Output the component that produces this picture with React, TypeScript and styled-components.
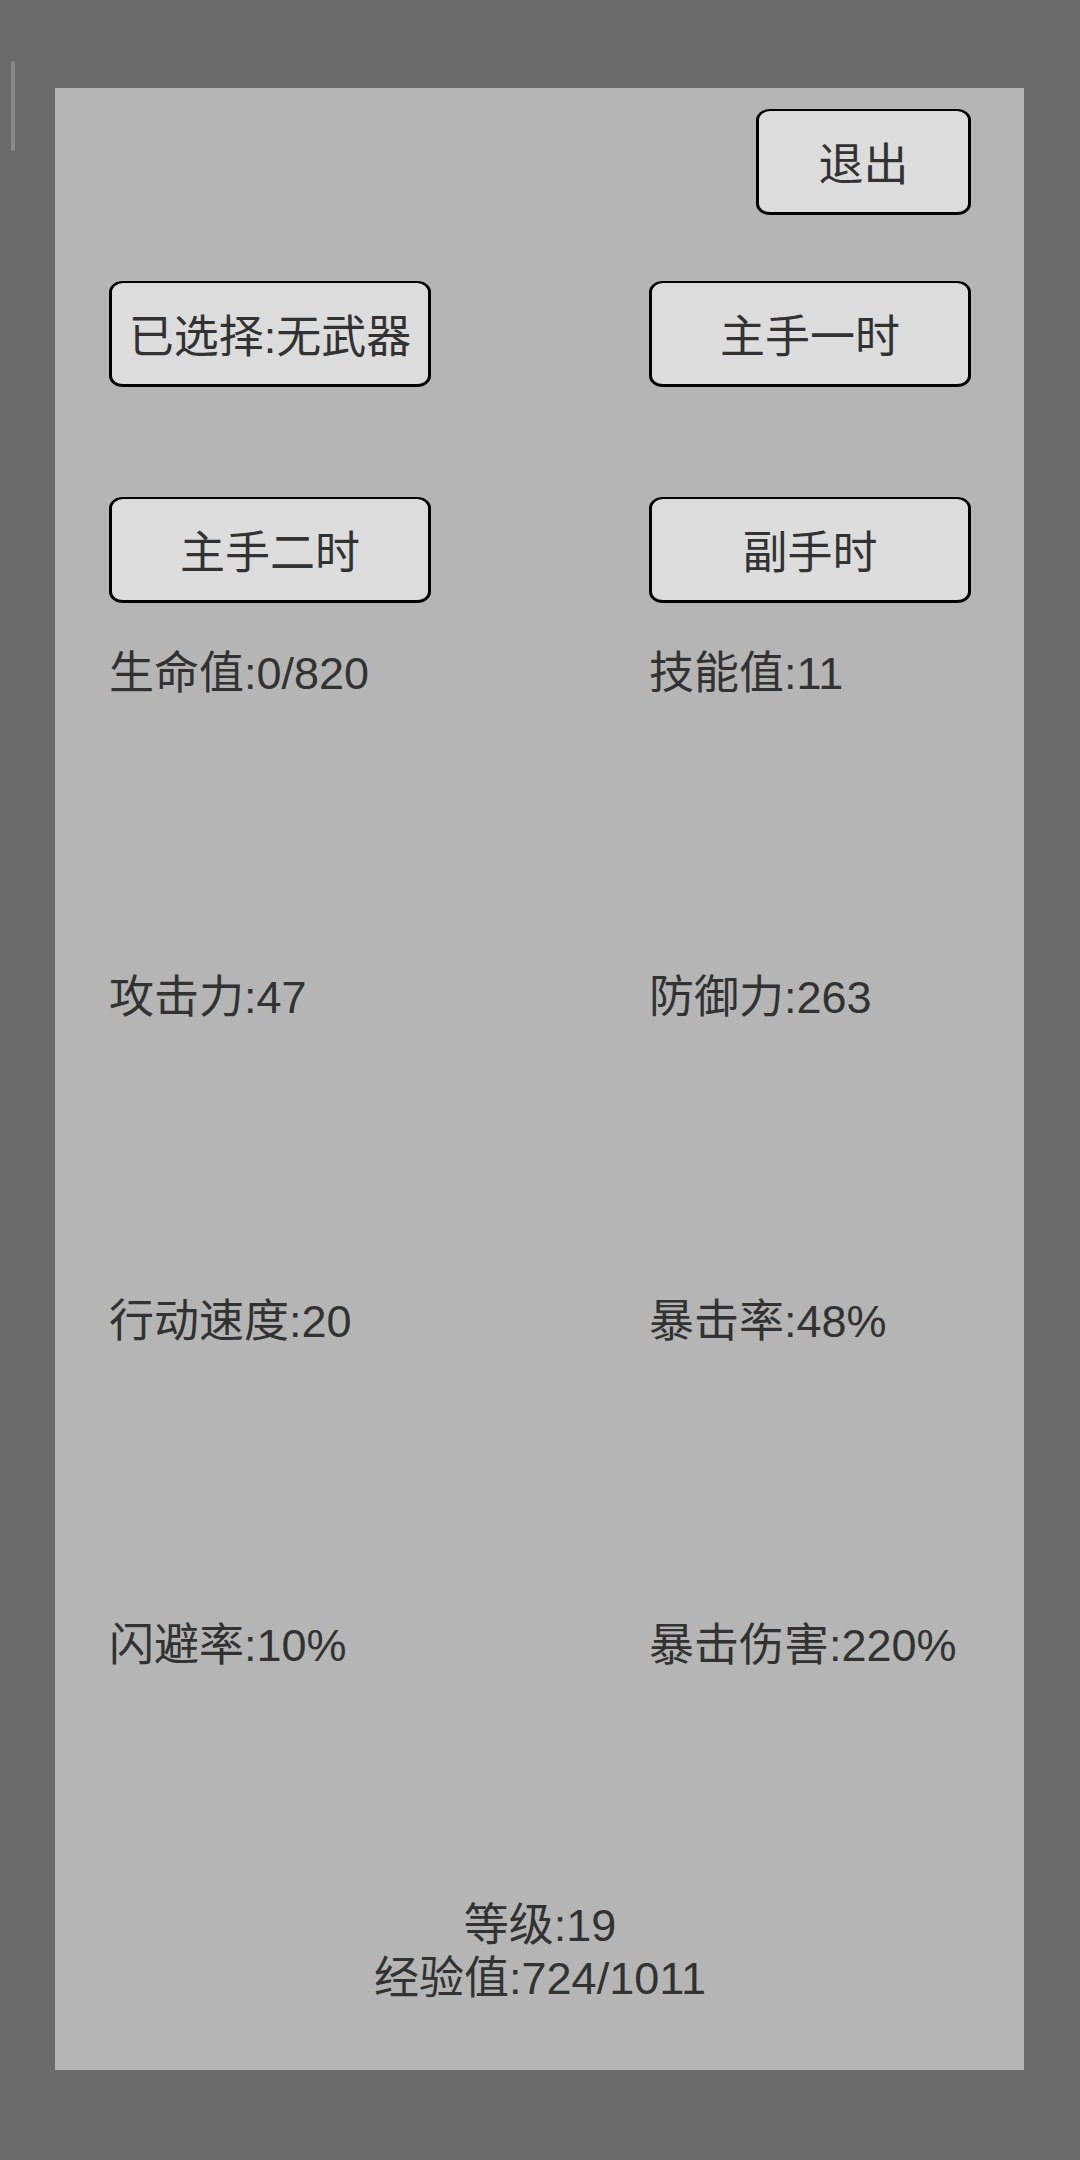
import { createGlobalStyle } from 'styled-components';
import styled from 'styled-components';

const COLOR = {
  outer: '#6b6b6b',
  panel: '#b5b5b5',
  button: '#dcdcdc',
  text: '#323232',
  border: '#000000',
  scroll: '#8a8a8a',
};

const Global = createGlobalStyle`
  html, body {
    margin: 0;
    padding: 0;
    background-color: ${COLOR.outer};
  }
  #root {
    min-height: 2160px;
  }
`;

const S = {
  Screen: styled.div`
    position: relative;
    width: 1080px;
    height: 2160px;
    padding: 88px 56px 0 55px;
    box-sizing: border-box;
    background-color: ${COLOR.outer};
    font-family: 'Liberation Sans', 'Noto Sans CJK SC', sans-serif;
    color: ${COLOR.text};
  `,
  ScrollMark: styled.div`
    position: absolute;
    left: 11px;
    top: 61px;
    width: 4px;
    height: 90px;
    border-radius: 2px;
    background-color: ${COLOR.scroll};
  `,
  Panel: styled.div`
    height: 1982px;
    padding: 21px 53px 0 54px;
    box-sizing: border-box;
    background-color: ${COLOR.panel};
    display: flex;
    flex-direction: column;
  `,
  TopBar: styled.div`
    display: flex;
    justify-content: flex-end;
  `,
  ButtonGrid: styled.div`
    margin-top: 66px;
    display: grid;
    grid-template-columns: 322px 322px;
    justify-content: space-between;
    row-gap: 110px;
  `,
  Button: styled.div<{ $width?: number }>`
    width: ${(p) => p.$width ?? 322}px;
    height: 106px;
    box-sizing: border-box;
    display: flex;
    align-items: center;
    justify-content: center;
    background-color: ${COLOR.button};
    border: 2px solid ${COLOR.border};
    border-left-width: 3px;
    border-right-width: 3px;
    border-bottom-width: 3px;
    border-radius: 14px / 11px;
    font-size: 45px;
    white-space: nowrap;
  `,
  StatGrid: styled.div`
    margin-top: 44px;
    display: grid;
    grid-template-columns: 322px 322px;
    justify-content: space-between;
    row-gap: 271px;
  `,
  Stat: styled.div`
    font-size: 45px;
    line-height: 53px;
    white-space: nowrap;
  `,
  Footer: styled.div`
    margin-top: 227px;
    text-align: center;
    font-size: 45px;
    line-height: 53px;
  `,
};

const stats = [
  '生命值:0/820',
  '技能值:11',
  '攻击力:47',
  '防御力:263',
  '行动速度:20',
  '暴击率:48%',
  '闪避率:10%',
  '暴击伤害:220%',
];

const weapons = ['已选择:无武器', '主手一时', '主手二时', '副手时'];

const App = () => {
  return (
    <>
      <Global />
      <S.Screen>
        <S.ScrollMark />
        <S.Panel>
          <S.TopBar>
            <S.Button $width={215}>退出</S.Button>
          </S.TopBar>
          <S.ButtonGrid>
            {weapons.map((w) => (
              <S.Button key={w}>{w}</S.Button>
            ))}
          </S.ButtonGrid>
          <S.StatGrid>
            {stats.map((s) => (
              <S.Stat key={s}>{s}</S.Stat>
            ))}
          </S.StatGrid>
          <S.Footer>
            <div>等级:19</div>
            <div>经验值:724/1011</div>
          </S.Footer>
        </S.Panel>
      </S.Screen>
    </>
  );
};

export default App;
